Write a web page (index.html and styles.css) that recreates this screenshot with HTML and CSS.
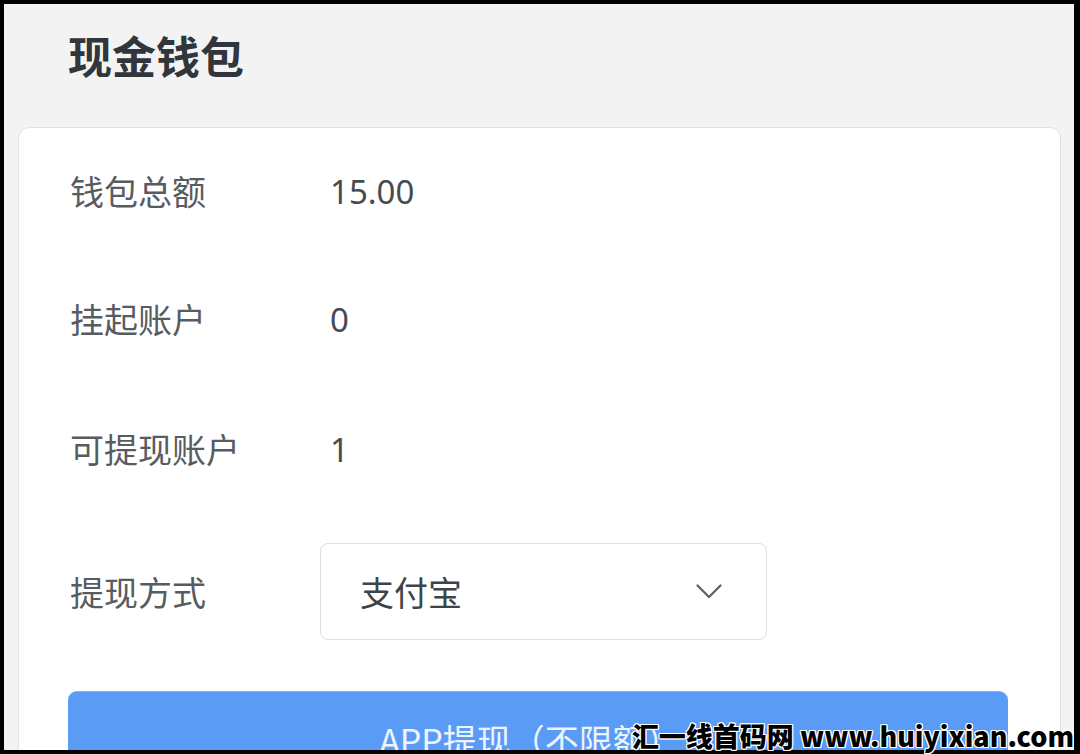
FILE: index.html
```html
<!DOCTYPE html>
<html lang="zh-CN">
<head>
<meta charset="utf-8">
<title>现金钱包</title>
<link rel="stylesheet" href="styles.css">
</head>
<body>
<div class="frame">
  <div class="screen">
    <header class="header"><h1 class="title">现金钱包</h1></header>
    <section class="card">
      <div class="row row-first"><span class="label">钱包总额</span><span class="value">15.00</span></div>
      <div class="row"><span class="label">挂起账户</span><span class="value">0</span></div>
      <div class="row"><span class="label">可提现账户</span><span class="value">1</span></div>
      <div class="row row-select">
        <span class="label">提现方式</span>
        <div class="select">
          <span class="select-text">支付宝</span>
          <svg class="chevron" width="26" height="15" viewBox="0 0 26 15"><path d="M1.5 1.5 L13 13 L24.5 1.5" fill="none" stroke="#5a5f64" stroke-width="2.2" stroke-linecap="round" stroke-linejoin="round"/></svg>
        </div>
      </div>
      <button class="btn">APP提现（不限额）</button>
    </section>
  </div>
  <div class="watermark">汇一线首码网 www.huiyixian.com</div>
</div>
</body>
</html>
```
FILE: styles.css
```css
html, body {
  margin: 0;
  padding: 0;
  background: #000;
}
.frame {
  position: relative;
  width: 1080px;
  height: 754px;
  box-sizing: border-box;
  padding: 4px 6px 4px 4px;
  overflow: hidden;
  font-family: "Noto Sans CJK SC", "Noto Sans", sans-serif;
}
.screen {
  height: 100%;
  background: #f3f3f3;
  overflow: hidden;
  display: flex;
  flex-direction: column;
}
.header {
  height: 102px;
  display: flex;
  align-items: center;
  padding-left: 64px;
  flex-shrink: 0;
}
.title {
  margin: 0;
  font-size: 44px;
  font-weight: 700;
  color: #30363b;
  line-height: 1;
}
.card {
  margin: 21px 13px 0 14px;
  background: #fff;
  border: 1px solid #e2e2e2;
  border-radius: 11px;
  padding: 0 0 0 49px;
  flex-shrink: 0;
  height: 720px;
  box-sizing: border-box;
}
.row {
  display: flex;
  align-items: center;
  height: 130px;
  padding-left: 2px;
}
.row-first {
  height: 126px;
}
.label {
  width: 250px;
  font-size: 34px;
  color: #575c61;
  line-height: 1;
}
.value {
  padding-left: 10px;
  font-size: 33px;
  color: #464b50;
  font-family: "Noto Sans", sans-serif;
  line-height: 1;
}
.row-select {
  height: 97px;
  margin-top: 29px;
}
.select {
  width: 447px;
  height: 97px;
  box-sizing: border-box;
  border: 1px solid #dedede;
  border-radius: 8px;
  display: flex;
  align-items: center;
  justify-content: space-between;
  padding: 0 44px 0 39px;
}
.select-text {
  font-size: 34px;
  color: #3e4347;
  line-height: 1;
}
.chevron {
  display: block;
}
.btn {
  display: flex;
  align-items: center;
  justify-content: center;
  margin-top: 51px;
  width: 940px;
  height: 96px;
  border: none;
  border-top: 1px solid #7fb3fa;
  border-radius: 9px;
  background: #5a9bf6;
  color: #eef4fe;
  font-family: "Noto Sans CJK SC", "Noto Sans", sans-serif;
  font-size: 34px;
  padding: 0 16px 0 0;
}
.watermark {
  position: absolute;
  right: 6px;
  bottom: 2px;
  font-family: "Noto Sans CJK SC", "Noto Sans", sans-serif;
  font-weight: 900;
  font-size: 27px;
  line-height: 32px;
  color: #000;
  letter-spacing: 0;
  white-space: nowrap;
  text-shadow: 1px 1px 0 #fff, -1px -1px 0 #fff, 1px -1px 0 #fff, -1px 1px 0 #fff, 0 1px 0 #fff, 1px 0 0 #fff, 0 -1px 0 #fff, -1px 0 0 #fff;
}
```
